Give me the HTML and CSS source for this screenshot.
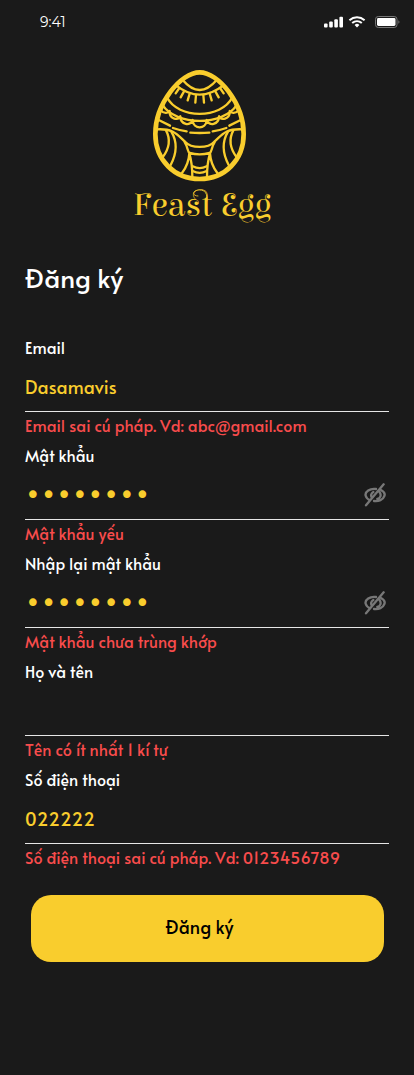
FILE: index.html
```html
<!DOCTYPE html>
<html lang="vi">
<head>
<meta charset="utf-8">
<meta name="viewport" content="width=device-width, initial-scale=1">
<title>Đăng ký</title>
<link rel="stylesheet" href="styles.css">
</head>
<body>
<header class="status">
  <span class="status-time">9:41</span>
  <svg class="status-icons" viewBox="0 0 76 14" aria-hidden="true">
    <g fill="#fff">
      <rect x="0" y="8.500" width="3.600" height="4" rx="1"/>
      <rect x="5.200" y="6.500" width="3.600" height="6" rx="1"/>
      <rect x="10.300" y="4.200" width="3.600" height="8.300" rx="1"/>
      <rect x="15.400" y="1.800" width="3.600" height="10.700" rx="1"/>
      <path d="M30.600 9.900a3.600 3.600 0 0 1 4.800 0L33 12.600z"/>
    </g>
    <path d="M25.400 5.200c4.400-3.900 10.800-3.900 15.200 0M28.200 8c2.800-2.400 6.800-2.400 9.600 0" fill="none" stroke="#fff" stroke-width="2"/>
    <rect x="51.500" y="1.500" width="21.500" height="11" rx="2.800" fill="none" stroke="#777"/>
    <rect x="53" y="3" width="18.500" height="8" rx="1.400" fill="#fff"/>
    <path d="M74.400 5.200v3.600c1.400-.6 1.400-3 0-3.600z" fill="#777"/>
  </svg>
</header>
<main class="page">
  <svg class="logo" viewBox="0 0 435 510" role="img" aria-label="Feast Egg">
    <g fill="none" stroke="#f9cd2d" stroke-width="7" stroke-linecap="round">
      <path stroke-width="14" d="M209 37C265 37 341 130 341 222C341 300 285 357 209 357S76 300 76 222C76 130 153 37 209 37Z"/>
      <path d="M158 60Q209 120 260 60M138 76Q209 132 280 76"/>
      <path d="M148 84l-11 16M162 94l-10 18M179 101l-6 20M198 105l-2 23M270 84l11 16M256 94l10 18M239 101l6 20M220 105l2 23"/>
      <path d="M111 112C144 178 274 178 307 112M97 134C138 199 280 199 321 134"/>
      <path d="M92 151C102 163 116 159 119 153M119 156C119 178 145 182 151 169M151 170C152 194 181 200 188 180M188 182C191 209 227 209 230 182M230 180C237 200 266 194 267 170M267 169C273 182 299 178 299 156M299 153C302 159 316 163 326 151"/>
      <path d="M86 180L120 197M129 204Q149 211 170 214M181 218Q209 220 238 218M248 214Q269 211 289 204M298 197L332 180"/>
      <path d="M80 208C129 205 140 222 165 245C184 266 234 266 253 245C278 222 289 205 338 208"/>
      <path d="M164 246C174 261 172 276 179 279Q209 287 239 279C246 276 244 261 254 246M178 280Q176 313 156 339M240 280Q242 313 262 339M178 280Q187 310 187 351M240 280Q231 310 231 351"/>
      <path d="M188 319Q209 330 230 319M188 333Q209 344 230 333"/>
      <path d="M108 211Q129 250 98 292M124 215Q151 260 122 315M310 211Q289 250 320 292M294 215Q267 260 296 315"/>
    </g>
    <text class="logo-name" x="217" y="466" text-anchor="middle">Feast Egg</text>
    <path d="M205 408C185 408 187 390 208 390C227 390 232 402 231 424" fill="none" stroke="#f9cd2d" stroke-width="2.500"/>
  </svg>
  <h1 class="title">Đăng ký</h1>
  <form class="form" novalidate>
    <div class="field">
      <label for="email">Email</label>
      <div class="control"><input id="email" type="text" value="Dasamavis" aria-describedby="email-error"></div>
      <p class="error" id="email-error">Email sai cú pháp. Vd: abc@gmail.com</p>
    </div>
    <div class="field">
      <label for="password">Mật khẩu</label>
      <div class="control">
        <input id="password" type="password" value="12345678" aria-describedby="password-error">
        <button class="reveal" type="button" aria-label="Hiện mật khẩu"><svg viewBox="0 0 66 72"><path d="M6 67L59 4M36 18C18 15 2 27 5 38C6 44 12 49 18 52M52 22C59 26 64 32 61 39C57 50 44 56 30 54M28 27C21 31 20 38 23 43M46 26C53 35 50 46 40 48"/></svg></button>
      </div>
      <p class="error" id="password-error">Mật khẩu yếu</p>
    </div>
    <div class="field">
      <label for="repeat">Nhập lại mật khẩu</label>
      <div class="control">
        <input id="repeat" type="password" value="12345679" aria-describedby="repeat-error">
        <button class="reveal" type="button" aria-label="Hiện mật khẩu"><svg viewBox="0 0 66 72"><path d="M6 67L59 4M36 18C18 15 2 27 5 38C6 44 12 49 18 52M52 22C59 26 64 32 61 39C57 50 44 56 30 54M28 27C21 31 20 38 23 43M46 26C53 35 50 46 40 48"/></svg></button>
      </div>
      <p class="error" id="repeat-error">Mật khẩu chưa trùng khớp</p>
    </div>
    <div class="field">
      <label for="name">Họ và tên</label>
      <div class="control"><input id="name" type="text" aria-describedby="name-error"></div>
      <p class="error" id="name-error">Tên có ít nhất 1 kí tự</p>
    </div>
    <div class="field">
      <label for="phone">Số điện thoại</label>
      <div class="control"><input id="phone" type="tel" value="022222" aria-describedby="phone-error"></div>
      <p class="error" id="phone-error">Số điện thoại sai cú pháp. Vd: 0123456789</p>
    </div>
    <button class="submit" type="submit">Đăng ký</button>
  </form>
</main>
</body>
</html>
```
FILE: styles.css
```css
* {
  box-sizing: border-box;
}

body {
  margin: 0;
  min-height: 100vh;
  background: #1a1a1a;
  color: #fff;
  font-family: Alata, Lato, "Open Sans", sans-serif;
  font-size: 16px;
  font-weight: 400;
  font-kerning: none;
}

.status {
  display: flex;
  align-items: center;
  justify-content: space-between;
  padding: 12px 14px 0 40px;
}

.status-time {
  font: 400 14px/20px Montserrat, "Open Sans", sans-serif;
}

.status-icons {
  width: 76px;
  height: 14px;
}

.page {
  padding: 28px 25px 0;
}

.logo {
  display: block;
  width: 145px;
  height: 170px;
  margin: 0 auto;
  translate: -5px;
}

.logo-name {
  font-family: "Elsie Swash Caps", Elsie, "Playfair Display", "Liberation Serif", serif;
  font-size: 100px;
  fill: #f9cd2d;
}

.title {
  margin: 27px 0 33px;
  font-size: 26px;
  line-height: 40px;
  font-weight: 400;
}

.field label {
  display: block;
  line-height: 34px;
}

.control {
  display: flex;
  align-items: center;
  height: 48px;
  border-bottom: 1px solid #e6e6e6;
}

.control input {
  flex: 1;
  min-width: 0;
  height: 100%;
  padding: 0 0 2px;
  border: 0;
  outline: 0;
  background: none;
  color: #f9cd2d;
  font: inherit;
  font-size: 18px;
}

.control input[type="password"] {
  font-family: "DejaVu Sans Mono", monospace;
  font-size: 26px;
}

.reveal {
  margin: 0 3px 2px 0;
  padding: 0;
  border: 0;
  background: none;
}

.reveal svg {
  display: block;
  width: 22px;
  height: 24px;
  fill: none;
  stroke: #777;
  stroke-width: 7;
  stroke-linecap: round;
}

.error {
  margin: 0;
  color: #f84c4c;
  line-height: 26px;
}

.submit {
  display: block;
  width: calc(100% - 11px);
  margin: 25px 5px 0 6px;
  padding: 19px 22px 22px 6px;
  border: 0;
  border-radius: 20px;
  background: #f9cd2d;
  color: #000;
  font: inherit;
  font-size: 18px;
  line-height: 26px;
}
```
